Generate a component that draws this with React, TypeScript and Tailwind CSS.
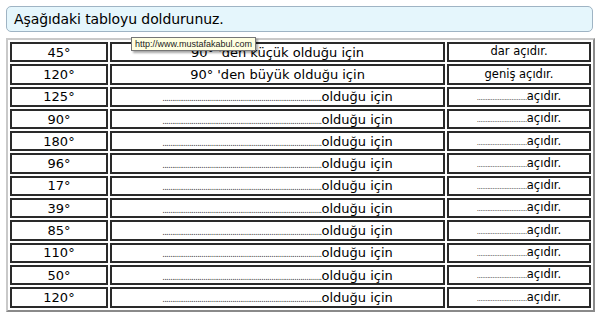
import React from 'react';

const FONT = { fontFamily: '"Comic Sans MS", "DejaVu Sans", sans-serif' };

type Row = { angle: string; reason?: string; result?: string };

const ROWS: Row[] = [
  { angle: '45°', reason: "90° 'den küçük olduğu için", result: 'dar açıdır.' },
  { angle: '120°', reason: "90° 'den büyük olduğu için", result: 'geniş açıdır.' },
  { angle: '125°' },
  { angle: '90°' },
  { angle: '180°' },
  { angle: '96°' },
  { angle: '17°' },
  { angle: '39°' },
  { angle: '85°' },
  { angle: '110°' },
  { angle: '50°' },
  { angle: '120°' },
];

const cell = 'border-2 border-[#2a2a2a] h-[20.3px] p-0 text-center align-middle leading-none';

export default function App() {
  return (
    <div className="relative w-[600px] h-[314px] bg-white text-black overflow-hidden" style={FONT}>
      <div className="ml-[6px] mt-[6px] w-[587px] h-[26px] rounded-[5px] border border-[#9fb4c4] bg-[#e5f6fc] flex items-center pl-[7px]">
        <span className="text-[14px] tracking-[-0.1px]">Aşağıdaki tabloyu doldurunuz.</span>
      </div>

      <table className="ml-[6px] mt-[6px] w-[589px] border-separate border-spacing-[2px] border-2 border-t-[#c9c9c9] border-l-[#c9c9c9] border-r-[#8a8a8a] border-b-[#8a8a8a]">
        <tbody>
          {ROWS.map((r, i) => (
            <tr key={i}>
              <td className={`${cell} w-[98px] text-[13px]`}>{r.angle}</td>
              <td className={`${cell} w-[335px] text-[13px]`}>
                {r.reason ? (
                  r.reason
                ) : (
                  <span>
                    <span className="text-[8px] tracking-[-0.6px] text-[#333]">
                      {'.'.repeat(82)}
                    </span>
                    olduğu için
                  </span>
                )}
              </td>
              <td className={`${cell} text-[11.5px]`}>
                {r.result ? (
                  r.result
                ) : (
                  <span>
                    <span className="text-[7px] tracking-[-0.5px] text-[#333]">{'.'.repeat(29)}</span>
                    açıdır.
                  </span>
                )}
              </td>
            </tr>
          ))}
        </tbody>
      </table>

      <div
        className="absolute left-[131px] top-[37px] h-[14px] px-[3px] border border-[#767676] bg-[#ffffe1] shadow-[2px_2px_2px_rgba(0,0,0,0.35)] text-[9px] leading-[12px] text-[#222] whitespace-nowrap"
        style={{ fontFamily: '"Liberation Sans", Arial, sans-serif' }}
      >
        http://www.mustafakabul.com
      </div>
    </div>
  );
}
